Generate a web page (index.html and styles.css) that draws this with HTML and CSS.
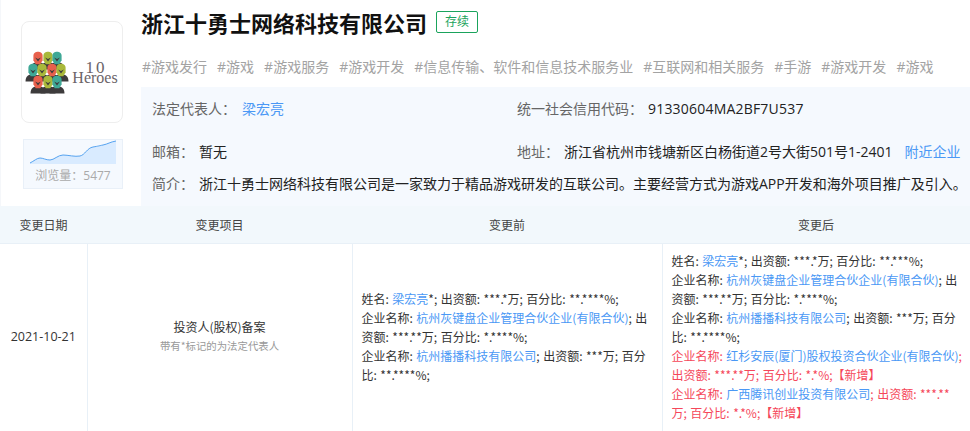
FILE: index.html
```html
<!DOCTYPE html>
<html lang="zh-CN">
<head>
    <meta charset="UTF-8">
    <meta name="viewport" content="width=device-width, initial-scale=1.0">
    <title>浙江十勇士网络科技有限公司</title>
    <link rel="stylesheet" href="styles.css">
</head>
<body>
    <div class="company">
        <div class="side">
            <div class="logo">
                <svg width="100" height="100" viewBox="0 0 100 100">
                    <defs>
                        <g id="hero" transform="scale(1.15)">
                            <path d="M-6.500 10C-6.500 5.500 -4 4.500 -2 4H2C4 4.500 6.500 5.500 6.500 10Z" fill="#3d3b3c"/>
                            <path d="M-4 -2C-4 -4.500 -2 -5.500 0 -5.500S4 -4.500 4 -2V2L2 5.500H-2L-4 2Z"/>
                            <path d="M-2.500 -0.500L0 3L2.500 -0.500L0 0.800Z" fill="#3d3b3c"/>
                        </g>
                    </defs>
                    <use href="#hero" x="16" y="36" fill="#e8604c"/>
                    <use href="#hero" x="26" y="36" fill="#a9b83a"/>
                    <use href="#hero" x="35" y="36" fill="#3fa896"/>
                    <use href="#hero" x="11" y="48" fill="#3fa896"/>
                    <use href="#hero" x="20" y="48" fill="#a9b83a"/>
                    <use href="#hero" x="30" y="48" fill="#e8604c"/>
                    <use href="#hero" x="39" y="48" fill="#a9b83a"/>
                    <use href="#hero" x="16" y="60" fill="#e8604c"/>
                    <use href="#hero" x="26" y="60" fill="#a9b83a"/>
                    <use href="#hero" x="35" y="60" fill="#3fa896"/>
                    <text class="logo-ten" x="74" y="51" text-anchor="middle">10</text>
                    <text class="logo-name" x="73" y="61" text-anchor="middle">Heroes</text>
                </svg>
            </div>
            <div class="views">
                <svg class="views-chart" width="86" height="24" viewBox="0 0 86 24">
                    <path d="M0 23C4 21 7 18 10 18S16 20 20 20S28 15 33 15S45 17 50 16S57 8 63 7S68 6 73 5S80 2 86 1V24H0Z" fill="#d9ebff"/>
                    <path d="M0 23C4 21 7 18 10 18S16 20 20 20S28 15 33 15S45 17 50 16S57 8 63 7S68 6 73 5S80 2 86 1" fill="none" stroke="#56a3f0"/>
                </svg>
                <div class="views-text">浏览量：5477</div>
            </div>
        </div>
        <div class="main">
            <div class="title-row">
                <h1>浙江十勇士网络科技有限公司</h1>
                <span class="status">存续</span>
            </div>
            <div class="tags">
                <span>#游戏发行</span>
                <span>#游戏</span>
                <span>#游戏服务</span>
                <span>#游戏开发</span>
                <span>#信息传输、软件和信息技术服务业</span>
                <span>#互联网和相关服务</span>
                <span>#手游</span>
                <span>#游戏开发</span>
                <span>#游戏</span>
            </div>
            <div class="info">
                <div class="info-row first">
                    <div class="info-left"><span class="label boss-label">法定代表人：</span><a class="link">梁宏亮</a></div>
                    <div><span class="label credit-label">统一社会信用代码：</span><span class="value code">91330604MA2BF7U537</span></div>
                </div>
                <div class="info-row second">
                    <div class="info-left"><span class="label short-label">邮箱：</span><span class="value">暂无</span></div>
                    <div><span class="label short-label">地址：</span><span class="value">浙江省杭州市钱塘新区白杨街道2号大街501号1-2401</span><a class="link nearby">附近企业</a></div>
                </div>
                <div class="info-row">
                    <div><span class="label short-label">简介：</span><span class="value">浙江十勇士网络科技有限公司是一家致力于精品游戏研发的互联公司。主要经营方式为游戏APP开发和海外项目推广及引入。</span></div>
                </div>
            </div>
        </div>
    </div>

    <table class="changes">
        <thead>
            <tr>
                <th class="col-date">变更日期</th>
                <th class="col-item">变更项目</th>
                <th class="col-before">变更前</th>
                <th>变更后</th>
            </tr>
        </thead>
        <tbody>
            <tr>
                <td class="center date">2021-10-21</td>
                <td class="center">
                    <div>投资人(股权)备案</div>
                    <div class="note">带有*标记的为法定代表人</div>
                </td>
                <td>
                    <div>姓名: <a class="link">梁宏亮</a>*; 出资额: ***.*万; 百分比: **.****%;</div>
                    <div>企业名称: <a class="link">杭州灰键盘企业管理合伙企业(有限合伙)</a>; 出资额: ***.**万; 百分比: *.****%;</div>
                    <div>企业名称: <a class="link">杭州播播科技有限公司</a>; 出资额: ***万; 百分比: **.****%;</div>
                </td>
                <td class="after">
                    <div>姓名: <a class="link">梁宏亮</a>*; 出资额: ***.*万; 百分比: **.***%;</div>
                    <div>企业名称: <a class="link">杭州灰键盘企业管理合伙企业(有限合伙)</a>; 出资额: ***.**万; 百分比: *.****%;</div>
                    <div>企业名称: <a class="link">杭州播播科技有限公司</a>; 出资额: ***万; 百分比: **.****%;</div>
                    <div class="added">企业名称: <a class="link">红杉安辰(厦门)股权投资合伙企业(有限合伙)</a>; 出资额: ***.**万; 百分比: *.*%;【新增】</div>
                    <div class="added">企业名称: <a class="link">广西腾讯创业投资有限公司</a>; 出资额: ***.**<br>万; 百分比: *.*%;【新增】</div>
                </td>
            </tr>
        </tbody>
    </table>
</body>
</html>
```

FILE: styles.css
```css
* {
    box-sizing: border-box;
}
html, body {
    height: 431px;
    overflow: hidden;
}
body {
    margin: 0;
    font-family: "Open Sans", "Noto Sans CJK SC", sans-serif;
    font-size: 14px;
    color: #333;
    background-color: white;
}
.company {
    display: flex;
    height: 206px;
    border-left: 1px solid #f5f7fa;
}
.side {
    width: 140px;
    padding: 21px 0 0 20px;
}
.logo {
    width: 102px;
    height: 102px;
    border: 1px solid #eee;
    border-radius: 8px;
    background-color: white;
}
.logo-ten {
    font-family: "Liberation Serif", serif;
    font-size: 17px;
    letter-spacing: 2px;
    fill: #6b6468;
}
.logo-name {
    font-family: "Liberation Serif", serif;
    font-size: 16px;
    fill: #6b6468;
}
.views {
    width: 100px;
    height: 50px;
    margin: 16px 0 0 2px;
    border: 1px solid #e9f0f8;
    background-color: #f5f9fe;
    text-align: center;
}
.views-chart {
    display: block;
    margin: 0 0 1px 6px;
}
.views-text {
    font-size: 12px;
    line-height: 22px;
    color: #aaa;
}
.main {
    flex: 1;
    min-width: 0;
}
.title-row {
    display: flex;
    align-items: center;
    height: 46px;
}
h1 {
    margin: 0;
    font-size: 22px;
    font-weight: bold;
    line-height: 46px;
    color: #111;
}
.status {
    width: 42px;
    height: 22px;
    margin: -2px 0 0 9px;
    border: 1px solid #1aa35c;
    border-radius: 2px;
    font-size: 12px;
    line-height: 20px;
    text-align: center;
    color: #1aa35c;
}
.tags {
    display: flex;
    gap: 10px;
    height: 41px;
    padding: 11px 0 0 1px;
    line-height: 20px;
    color: #a3a3a3;
    white-space: nowrap;
}
.info {
    height: 119px;
    padding: 12px 0 0 11px;
    background-color: #f5f9fe;
    line-height: 20px;
}
.info-row {
    display: flex;
    white-space: nowrap;
}
.info-row.first {
    margin-bottom: 23px;
}
.info-row.second {
    margin-bottom: 12px;
}
.info-left {
    width: 365px;
}
.label {
    display: inline-block;
    color: #666;
}
.boss-label {
    width: 90px;
}
.credit-label {
    width: 131px;
}
.short-label {
    width: 47px;
}
.value {
    color: #222;
}
.code {
    letter-spacing: 0.2px;
}
.link {
    color: #4a98f5;
}
.nearby {
    margin-left: 12px;
}
.changes {
    width: 970px;
    border-collapse: collapse;
    table-layout: fixed;
    font-family: "Noto Sans CJK SC", sans-serif;
    font-size: 12px;
    word-spacing: 0.8px;
}
.changes th {
    height: 37px;
    padding: 0;
    border-bottom: 1px solid #e8f0f7;
    background-color: #f2f8fc;
    font-weight: normal;
    color: #444;
}
.col-date {
    width: 87px;
}
.col-item {
    width: 265px;
}
.col-before {
    width: 310px;
}
.changes td {
    padding: 7px 9px 9px;
    border-right: 1px solid #e8f0f7;
    line-height: 19px;
    color: #333;
}
.changes td.after {
    padding-right: 5px;
    border-right: none;
}
.changes .center {
    text-align: center;
}
.changes .date {
    padding: 7px 0 9px;
    font-family: "Open Sans", sans-serif;
    font-size: 12.500px;
}
.note {
    font-size: 10.400px;
    color: #999;
}
.added {
    color: #f5475a;
}
```
